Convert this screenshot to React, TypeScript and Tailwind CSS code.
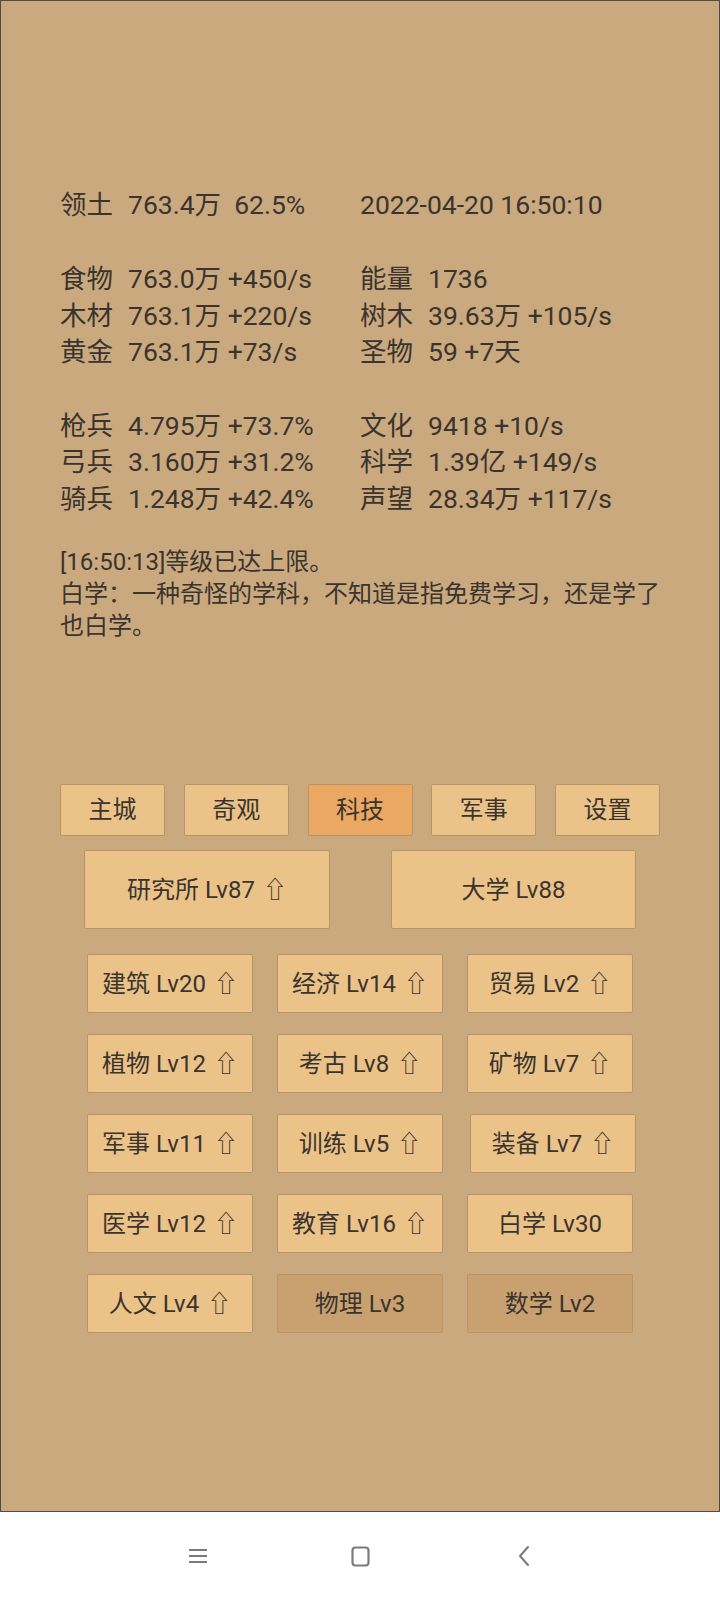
import React from 'react';

// 游戏主界面：资源统计 + 科技页签
const FONT = "font-['Roboto','Noto_Sans_CJK_SC','DejaVu_Sans',sans-serif]";

const STATS_TOP: [string, string, string, string][] = [['领土', '763.4万  62.5%', '', '2022-04-20 16:50:10']];

const STATS_RES: [string, string, string, string][] = [
  ['食物', '763.0万 +450/s', '能量', '1736'],
  ['木材', '763.1万 +220/s', '树木', '39.63万 +105/s'],
  ['黄金', '763.1万 +73/s', '圣物', '59 +7天'],
];

const STATS_ARMY: [string, string, string, string][] = [
  ['枪兵', '4.795万 +73.7%', '文化', '9418 +10/s'],
  ['弓兵', '3.160万 +31.2%', '科学', '1.39亿 +149/s'],
  ['骑兵', '1.248万 +42.4%', '声望', '28.34万 +117/s'],
];

const TABS = ['主城', '奇观', '科技', '军事', '设置'];

type Tech = { name: string; up?: boolean; locked?: boolean; shift?: boolean };

const TECH: Tech[][] = [
  [{ name: '建筑 Lv20', up: true }, { name: '经济 Lv14', up: true }, { name: '贸易 Lv2', up: true }],
  [{ name: '植物 Lv12', up: true }, { name: '考古 Lv8', up: true }, { name: '矿物 Lv7', up: true }],
  [{ name: '军事 Lv11', up: true }, { name: '训练 Lv5', up: true }, { name: '装备 Lv7', up: true, shift: true }],
  [{ name: '医学 Lv12', up: true }, { name: '教育 Lv16', up: true }, { name: '白学 Lv30' }],
  [{ name: '人文 Lv4', up: true }, { name: '物理 Lv3', locked: true }, { name: '数学 Lv2', locked: true }],
];

function Up() {
  return <span className="ml-[8px]">⇧</span>;
}

function StatRow({ row }: { row: [string, string, string, string] }) {
  return (
    <div className="flex h-[36.7px] items-center whitespace-pre">
      <div className="w-[300px] flex">
        <span className="w-[68px]">{row[0]}</span>
        <span>{row[1]}</span>
      </div>
      <div className="flex">
        {row[2] ? <span className="w-[68px]">{row[2]}</span> : null}
        <span>{row[3]}</span>
      </div>
    </div>
  );
}

export default function App() {
  return (
    <div className={`w-[720px] h-[1600px] flex flex-col bg-white text-[#3a342e] ${FONT}`}>
      <div className="h-[1512px] border border-[#4d4b48] bg-[#caa97f] px-[59px] pt-[186px]">
        {/* 统计 */}
        <div className="text-[26.5px]">
          {STATS_TOP.map((r) => <StatRow key={r[0]} row={r} />)}
          <div className="h-[36.7px]" />
          {STATS_RES.map((r) => <StatRow key={r[0]} row={r} />)}
          <div className="h-[36.7px]" />
          {STATS_ARMY.map((r) => <StatRow key={r[0]} row={r} />)}
        </div>

        {/* 日志 */}
        <div className="mt-[30px] text-[24px] leading-[31.7px]">
          <p>[16:50:13]等级已达上限。</p>
          <p>白学：一种奇怪的学科，不知道是指免费学习，还是学了也白学。</p>
        </div>

        {/* 页签 */}
        <div className="mt-[142px] flex justify-between">
          {TABS.map((t) => (
            <div
              key={t}
              className={`w-[105px] h-[52px] flex items-center justify-center text-[24px] border border-[#b8946a] rounded-[2px] ${
                t === '科技' ? 'bg-[#eaa862]' : 'bg-[#ebc288]'
              }`}
            >
              {t}
            </div>
          ))}
        </div>

        {/* 建筑 */}
        <div className="mt-[14px] ml-[24px] flex gap-[61px]">
          <div className="w-[246px] h-[79px] flex items-center justify-center text-[24px] bg-[#ebc288] border border-[#b8946a] rounded-[2px]">
            研究所 Lv87<Up />
          </div>
          <div className="w-[245px] h-[79px] flex items-center justify-center text-[24px] bg-[#ebc288] border border-[#b8946a] rounded-[2px]">
            大学 Lv88
          </div>
        </div>

        {/* 科技列表 */}
        <div className="mt-[25px] ml-[27px] flex flex-col gap-[21px]">
          {TECH.map((row, i) => (
            <div key={i} className="flex gap-[24px]">
              {row.map((t) => (
                <div
                  key={t.name}
                  className={`w-[166px] h-[59px] flex items-center justify-center text-[24px] border border-[#b8946a] rounded-[2px] ${
                    t.locked ? 'bg-[#c9a06f]' : 'bg-[#ebc288]'
                  } ${t.shift ? 'ml-[3px]' : ''}`}
                >
                  {t.name}
                  {t.up ? <Up /> : null}
                </div>
              ))}
            </div>
          ))}
        </div>
      </div>

      {/* 系统导航栏 */}
      <div className="h-[88px] flex items-center justify-center">
        <div className="relative w-[720px] h-full">
          <svg className="absolute left-[188px] top-[34px]" width="20" height="20" viewBox="0 0 20 20" fill="none" stroke="#7a7a7a" strokeWidth="2">
            <path d="M1 4h18M1 10h18M1 16h18" />
          </svg>
          <svg className="absolute left-[351px] top-[34px]" width="19" height="21" viewBox="0 0 19 21" fill="none" stroke="#7a7a7a" strokeWidth="2.2">
            <rect x="1.5" y="1.5" width="16" height="18" rx="3" />
          </svg>
          <svg className="absolute left-[517px] top-[33px]" width="14" height="22" viewBox="0 0 14 22" fill="none" stroke="#7a7a7a" strokeWidth="2" strokeLinecap="round" strokeLinejoin="round">
            <path d="M11 2 3 11l8 9" />
          </svg>
        </div>
      </div>
    </div>
  );
}
